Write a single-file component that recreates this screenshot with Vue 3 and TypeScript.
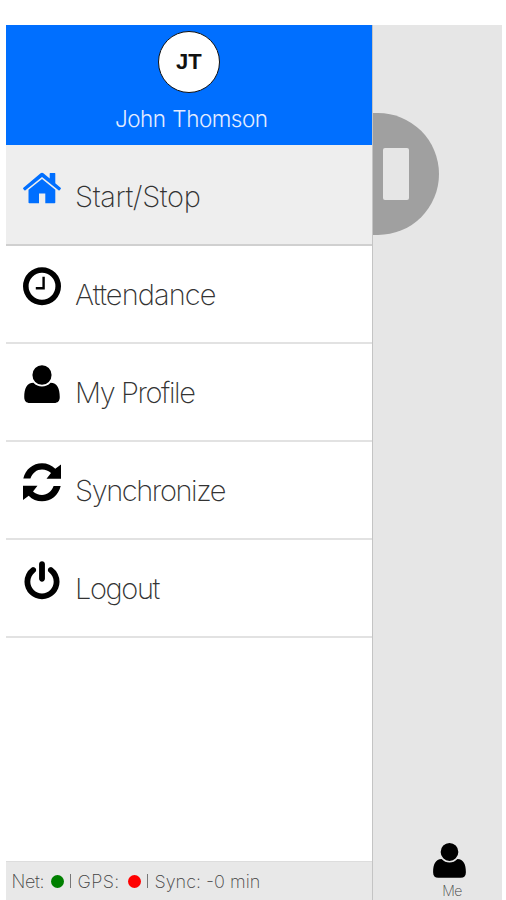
<script setup lang="ts">
interface MenuItem {
  id: string
  label: string
  viewBox: string
  path: string
  active?: boolean
}

const userPath =
  'M19 0.2a9.6 9.8 0 1 1 0 19.6a9.6 9.8 0 1 1 0-19.6zM10.4 17.8C12.8 20.4 15.7 21.6 19 21.6s6.2-1.2 8.6-3.8C34.2 18 36.8 23.5 36.8 32c0 4-2 6-5.6 6H6.8C3.2 38 1.2 36 1.2 32c0-8.500 2.600-14 9.200-14.200z'

const items: MenuItem[] = [
  {
    id: 'start',
    label: 'Start/Stop',
    active: true,
    viewBox: '0 0 38 38',
    path: 'M17.600 4.100Q19 3 20.400 4.100L26.700 9.300V4.300Q26.700 3.700 27.300 3.700H31.700Q32.300 3.700 32.300 4.300V14L37.600 18.500Q38.200 19.100 37.700 19.700L36.600 21Q36.100 21.400 35.500 21L19 7.700L2.500 21Q1.900 21.400 1.400 21L.3 19.700Q-.2 19.100 .4 18.500zM19 9.700L32.300 20.500V33.200Q32.300 34 31.500 34H22.300V24.200H16V34H6.300Q5.500 34 5.500 33.200V20.500z',
  },
  {
    id: 'attendance',
    label: 'Attendance',
    viewBox: '0 0 38 38',
    path: 'M19 0a19 19 0 1 1 0 38a19 19 0 1 1 0-38zM19 5.6a13.4 13.4 0 1 0 0 26.8a13.4 13.4 0 1 0 0-26.8zM19.4 9.6h2.4v12.6h-9v-2.4h6.6z',
  },
  { id: 'profile', label: 'My Profile', viewBox: '0 0 38 38.6', path: userPath },
  {
    id: 'sync',
    label: 'Synchronize',
    viewBox: '0 0 38 38.2',
    path: 'M.3 15.300C2.500 6 10 0 19 0c5.200 0 9.800 2 13.300 5.600L38 1.300V15.500H23.500L28 9.800C25.500 7.600 22.500 6.400 19 6.400c-5.300 0-9.500 3.400-11.600 8.900zM37.700 22.900C35.500 32.200 28 38.200 19 38.200c-5.200 0-9.800-2-13.300-5.600L0 36.900V22.700H14.500L10 28.400C12.500 30.600 15.500 31.800 19 31.800c5.300 0 9.500-3.400 11.600-8.900z',
  },
  {
    id: 'logout',
    label: 'Logout',
    viewBox: '64 0 1664 1664',
    path: 'M1664 896q0 156-61 298t-164 245-245 164-298 61-298-61-245-164-164-245-61-298q0-182 80.5-343t226.5-270q43-32 95.5-25t83.5 50q32 42 24.5 94.5t-49.5 84.5q-98 74-151.5 181t-53.5 228q0 104 40.5 198.5t109.5 163.5 163.5 109.5 198.5 40.5 198.5-40.5 163.5-109.5 109.5-163.5 40.5-198.5q0-121-53.5-228t-151.5-181q-42-32-49.5-84.5t24.5-94.5q31-43 84-50t95 25q146 109 226.5 270t80.5 343zm-640-768v640q0 52-38 90t-90 38-90-38-38-90v-640q0-52 38-90t90-38 90 38 38 90z',
  },
]
</script>

<template>
  <div class="screen">
    <aside class="drawer">
      <header class="head">
        <div class="avatar">JT</div>
        <div class="name">John Thomson</div>
      </header>
      <nav class="menu">
        <a v-for="item in items" :key="item.id" class="item" :class="[item.id, { active: item.active }]">
          <svg class="icon" :viewBox="item.viewBox"><path fill-rule="evenodd" :d="item.path" /></svg>
          <span class="label">{{ item.label }}</span>
        </a>
      </nav>
      <footer class="status">
        <span class="net">Net:</span><i class="dot on"></i><span class="bar"></span>
        <span class="gps">GPS:</span><i class="dot off"></i><span class="bar"></span>
        <span class="last">Sync: <span class="min">-0 min</span></span>
      </footer>
    </aside>
    <main class="content">
      <div class="stop"><span class="stop-mark"></span></div>
      <div class="tab">
        <svg class="tab-icon" viewBox="0 0 38 38.6"><path :d="userPath" /></svg>
        <span class="tab-label">Me</span>
      </div>
    </main>
  </div>
</template>

<style>
body {
  background: #fff;
  overflow: hidden;
}
</style>

<style scoped>
.screen {
  box-sizing: border-box;
  width: 506px;
  height: 900px;
  padding: 25px 4px 0 5.5px;
  display: flex;
  overflow: hidden;
  font-family: Inter, 'Liberation Sans', sans-serif;
  font-weight: 200;
  color: #333;
}
.drawer {
  width: 366.5px;
  flex: none;
  display: flex;
  flex-direction: column;
  background: #fff;
}
.head {
  height: 120px;
  background: #006fff;
  display: flex;
  flex-direction: column;
  align-items: center;
}
.avatar {
  box-sizing: border-box;
  width: 62px;
  height: 62px;
  margin-top: 5.5px;
  border: 1.5px solid #111;
  border-radius: 50%;
  background: #fff;
  color: #111;
  font: bold 22px/60px 'Liberation Sans', sans-serif;
  text-align: center;
}
.name {
  margin: 12px 0 0 5px;
  font-size: 22.5px;
  line-height: 28px;
  font-weight: 300;
  letter-spacing: -0.5px;
  word-spacing: 1px;
  white-space: nowrap;
  color: #e4ecff;
}
.item {
  box-sizing: border-box;
  height: 98px;
  padding: 21px 0 0 17.5px;
  display: flex;
  align-items: flex-start;
  border-bottom: 2px solid #e2e2e2;
}
.item.active {
  height: 101px;
  padding-top: 24px;
  background: #eee;
  border-color: #d0d0d0;
}
.icon {
  width: 38px;
  height: 38.5px;
  flex: none;
  fill: #000;
}
.active .icon {
  fill: #006fff;
}
.label {
  margin: 10px 0 0 14px;
  font-size: 29px;
  line-height: 36px;
  letter-spacing: -1.4px;
  white-space: nowrap;
}
.start .label {
  letter-spacing: -0.4px;
}
.attendance .label {
  letter-spacing: -0.9px;
}
.status {
  box-sizing: border-box;
  height: 39px;
  margin-top: auto;
  padding-left: 6px;
  display: flex;
  align-items: center;
  background: #e8e8e8;
  border-top: 1px solid #ddd;
  font-size: 18px;
  color: #444;
  white-space: nowrap;
}
.net {
  width: 39px;
  letter-spacing: -0.3px;
}
.gps {
  width: 50px;
  letter-spacing: 0.4px;
}
.dot {
  width: 13px;
  height: 13px;
  border-radius: 50%;
}
.on {
  background: #008000;
}
.off {
  background: #f00;
}
.bar {
  width: 1px;
  height: 14px;
  margin: 0 7px 0 6px;
  background: #777;
}
.content {
  flex: 1;
  display: flex;
  flex-direction: column;
  overflow: hidden;
  background: #e6e6e6;
  border-left: 1.5px solid #c4c4c4;
}
.stop {
  width: 66px;
  height: 122px;
  margin-top: 88px;
  display: flex;
  align-items: center;
  border-radius: 0 61px 61px 0;
  background: #a0a0a0;
}
.stop-mark {
  width: 26px;
  height: 52px;
  margin-left: 9.5px;
  border-radius: 2px;
  background: #e6e6e6;
}
.tab {
  margin-top: auto;
  padding: 0 0 0 24px;
  display: flex;
  flex-direction: column;
  align-items: center;
}
.tab-icon {
  width: 35px;
  height: 37px;
}
.tab-label {
  margin: 3px 0 0 5px;
  font-size: 14px;
  line-height: 18px;
  letter-spacing: -0.5px;
  color: #444;
}
</style>
